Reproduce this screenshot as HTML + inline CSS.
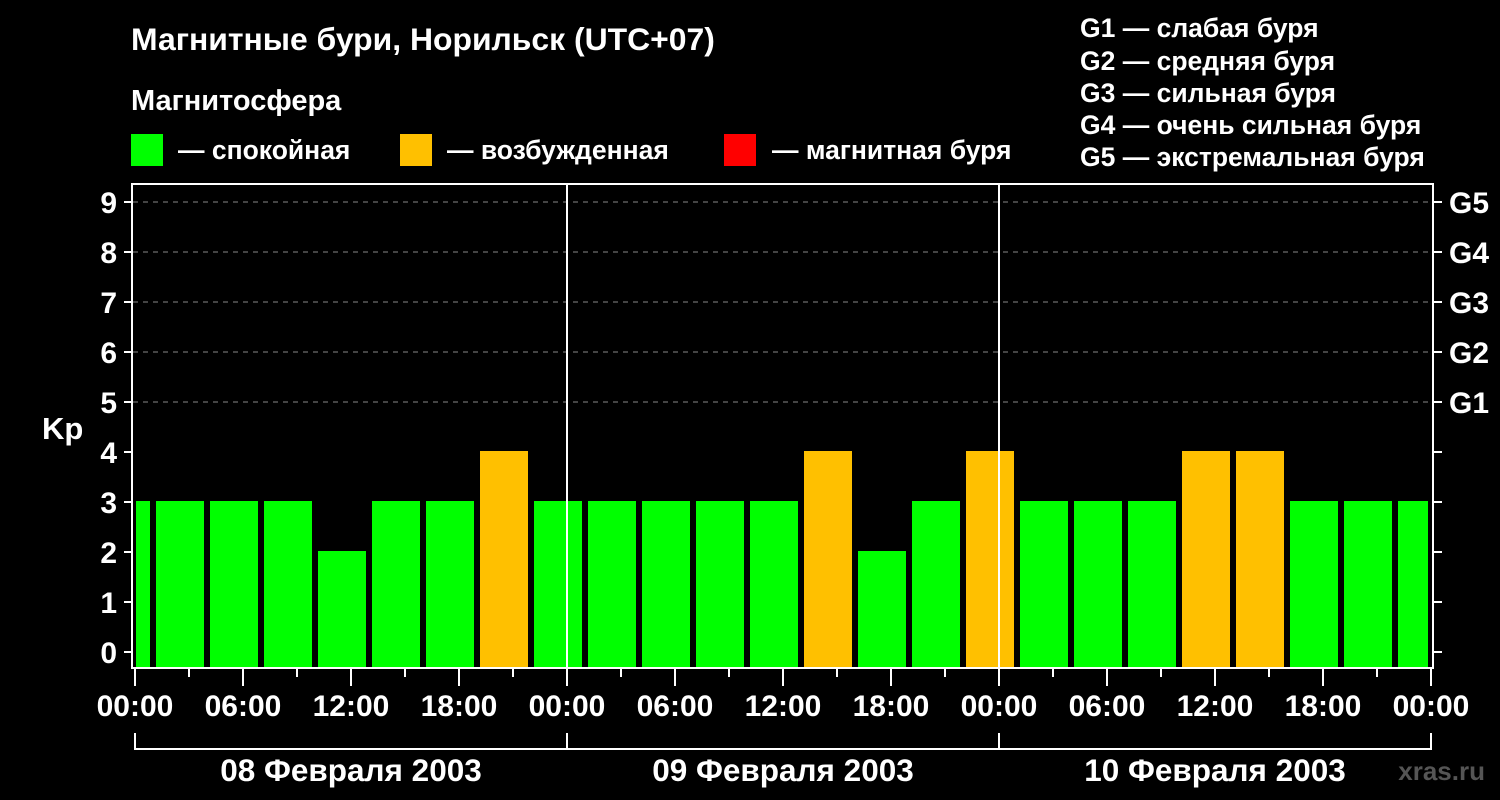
<!DOCTYPE html>
<html><head><meta charset="utf-8"><style>
html,body{margin:0;padding:0;background:#000;}
svg{display:block;font-family:"Liberation Sans",sans-serif;font-weight:bold;}
</style></head><body>
<svg width="1500" height="800" xmlns="http://www.w3.org/2000/svg">
<rect width="1500" height="800" fill="#000"/>
<g fill="#fff">
<text x="131" y="50" font-size="31.9">Магнитные бури, Норильск (UTC+07)</text>
<text x="131" y="110" font-size="29">Магнитосфера</text>
<g font-size="26.5">
<text x="178" y="159">— спокойная</text>
<text x="447" y="159">— возбужденная</text>
<text x="772" y="159">— магнитная буря</text>
<text x="1080" y="37">G1 — слабая буря</text>
<text x="1080" y="70">G2 — средняя буря</text>
<text x="1080" y="102">G3 — сильная буря</text>
<text x="1080" y="134">G4 — очень сильная буря</text>
<text x="1080" y="166">G5 — экстремальная буря</text>
</g>
</g>
<rect x="131" y="134" width="32" height="32" fill="#00ff00"/>
<rect x="400" y="134" width="32" height="32" fill="#ffc000"/>
<rect x="724" y="134" width="32" height="32" fill="#ff0000"/>
<g stroke="#888" stroke-width="1" stroke-dasharray="5,5">
<line x1="133" x2="1433" y1="202" y2="202"/>
<line x1="133" x2="1433" y1="252" y2="252"/>
<line x1="133" x2="1433" y1="302" y2="302"/>
<line x1="133" x2="1433" y1="352" y2="352"/>
<line x1="133" x2="1433" y1="402" y2="402"/>
</g>
<g>
<rect x="136" y="501" width="14" height="167" fill="#00ff00"/>
<rect x="156" y="501" width="48" height="167" fill="#00ff00"/>
<rect x="210" y="501" width="48" height="167" fill="#00ff00"/>
<rect x="264" y="501" width="48" height="167" fill="#00ff00"/>
<rect x="318" y="551" width="48" height="117" fill="#00ff00"/>
<rect x="372" y="501" width="48" height="167" fill="#00ff00"/>
<rect x="426" y="501" width="48" height="167" fill="#00ff00"/>
<rect x="480" y="451" width="48" height="217" fill="#ffc000"/>
<rect x="534" y="501" width="48" height="167" fill="#00ff00"/>
<rect x="588" y="501" width="48" height="167" fill="#00ff00"/>
<rect x="642" y="501" width="48" height="167" fill="#00ff00"/>
<rect x="696" y="501" width="48" height="167" fill="#00ff00"/>
<rect x="750" y="501" width="48" height="167" fill="#00ff00"/>
<rect x="804" y="451" width="48" height="217" fill="#ffc000"/>
<rect x="858" y="551" width="48" height="117" fill="#00ff00"/>
<rect x="912" y="501" width="48" height="167" fill="#00ff00"/>
<rect x="966" y="451" width="48" height="217" fill="#ffc000"/>
<rect x="1020" y="501" width="48" height="167" fill="#00ff00"/>
<rect x="1074" y="501" width="48" height="167" fill="#00ff00"/>
<rect x="1128" y="501" width="48" height="167" fill="#00ff00"/>
<rect x="1182" y="451" width="48" height="217" fill="#ffc000"/>
<rect x="1236" y="451" width="48" height="217" fill="#ffc000"/>
<rect x="1290" y="501" width="48" height="167" fill="#00ff00"/>
<rect x="1344" y="501" width="48" height="167" fill="#00ff00"/>
<rect x="1398" y="501" width="30" height="167" fill="#00ff00"/>
</g>
<g stroke="#fff" stroke-width="2" fill="none">
<rect x="132" y="184" width="1301" height="484"/>
<line x1="567" x2="567" y1="184" y2="668"/>
<line x1="999" x2="999" y1="184" y2="668"/>
<path d="M124 202H132M124 252H132M124 302H132M124 352H132M124 402H132M124 452H132M124 502H132M124 552H132M124 602H132M124 652H132"/>
<path d="M1433 202H1442M1433 252H1442M1433 302H1442M1433 352H1442M1433 402H1442M1433 452H1442M1433 502H1442M1433 552H1442M1433 602H1442M1433 652H1442"/>
<path d="M135 668V686M243 668V686M351 668V686M459 668V686M567 668V686M675 668V686M783 668V686M891 668V686M999 668V686M1107 668V686M1215 668V686M1323 668V686M1431 668V686"/>
<path d="M189 668V677M297 668V677M405 668V677M513 668V677M621 668V677M729 668V677M837 668V677M945 668V677M1053 668V677M1161 668V677M1269 668V677M1377 668V677"/>
<path d="M135 733V749H1431V733M567 733V749M999 733V749"/>
</g>
<g fill="#fff" font-size="30" text-anchor="end">
<text x="117" y="213">9</text><text x="117" y="263">8</text><text x="117" y="313">7</text>
<text x="117" y="363">6</text><text x="117" y="413">5</text><text x="117" y="463">4</text>
<text x="117" y="513">3</text><text x="117" y="563">2</text><text x="117" y="613">1</text>
<text x="117" y="663">0</text>
</g>
<text x="42" y="439" fill="#fff" font-size="31">Kp</text>
<g fill="#fff" font-size="30">
<text x="1449" y="213">G5</text><text x="1449" y="263">G4</text><text x="1449" y="313">G3</text>
<text x="1449" y="363">G2</text><text x="1449" y="413">G1</text>
</g>
<g fill="#fff" font-size="30" text-anchor="middle">
<text x="135" y="716">00:00</text><text x="243" y="716">06:00</text><text x="351" y="716">12:00</text><text x="459" y="716">18:00</text>
<text x="567" y="716">00:00</text><text x="675" y="716">06:00</text><text x="783" y="716">12:00</text><text x="891" y="716">18:00</text>
<text x="999" y="716">00:00</text><text x="1107" y="716">06:00</text><text x="1215" y="716">12:00</text><text x="1323" y="716">18:00</text>
<text x="1431" y="716">00:00</text>
<text x="351" y="781" font-size="31.5">08 Февраля 2003</text>
<text x="783" y="781" font-size="31.5">09 Февраля 2003</text>
<text x="1215" y="781" font-size="31.5">10 Февраля 2003</text>
</g>
<text x="1485" y="780" fill="#555" font-size="26" text-anchor="end">xras.ru</text>
</svg>
</body></html>
